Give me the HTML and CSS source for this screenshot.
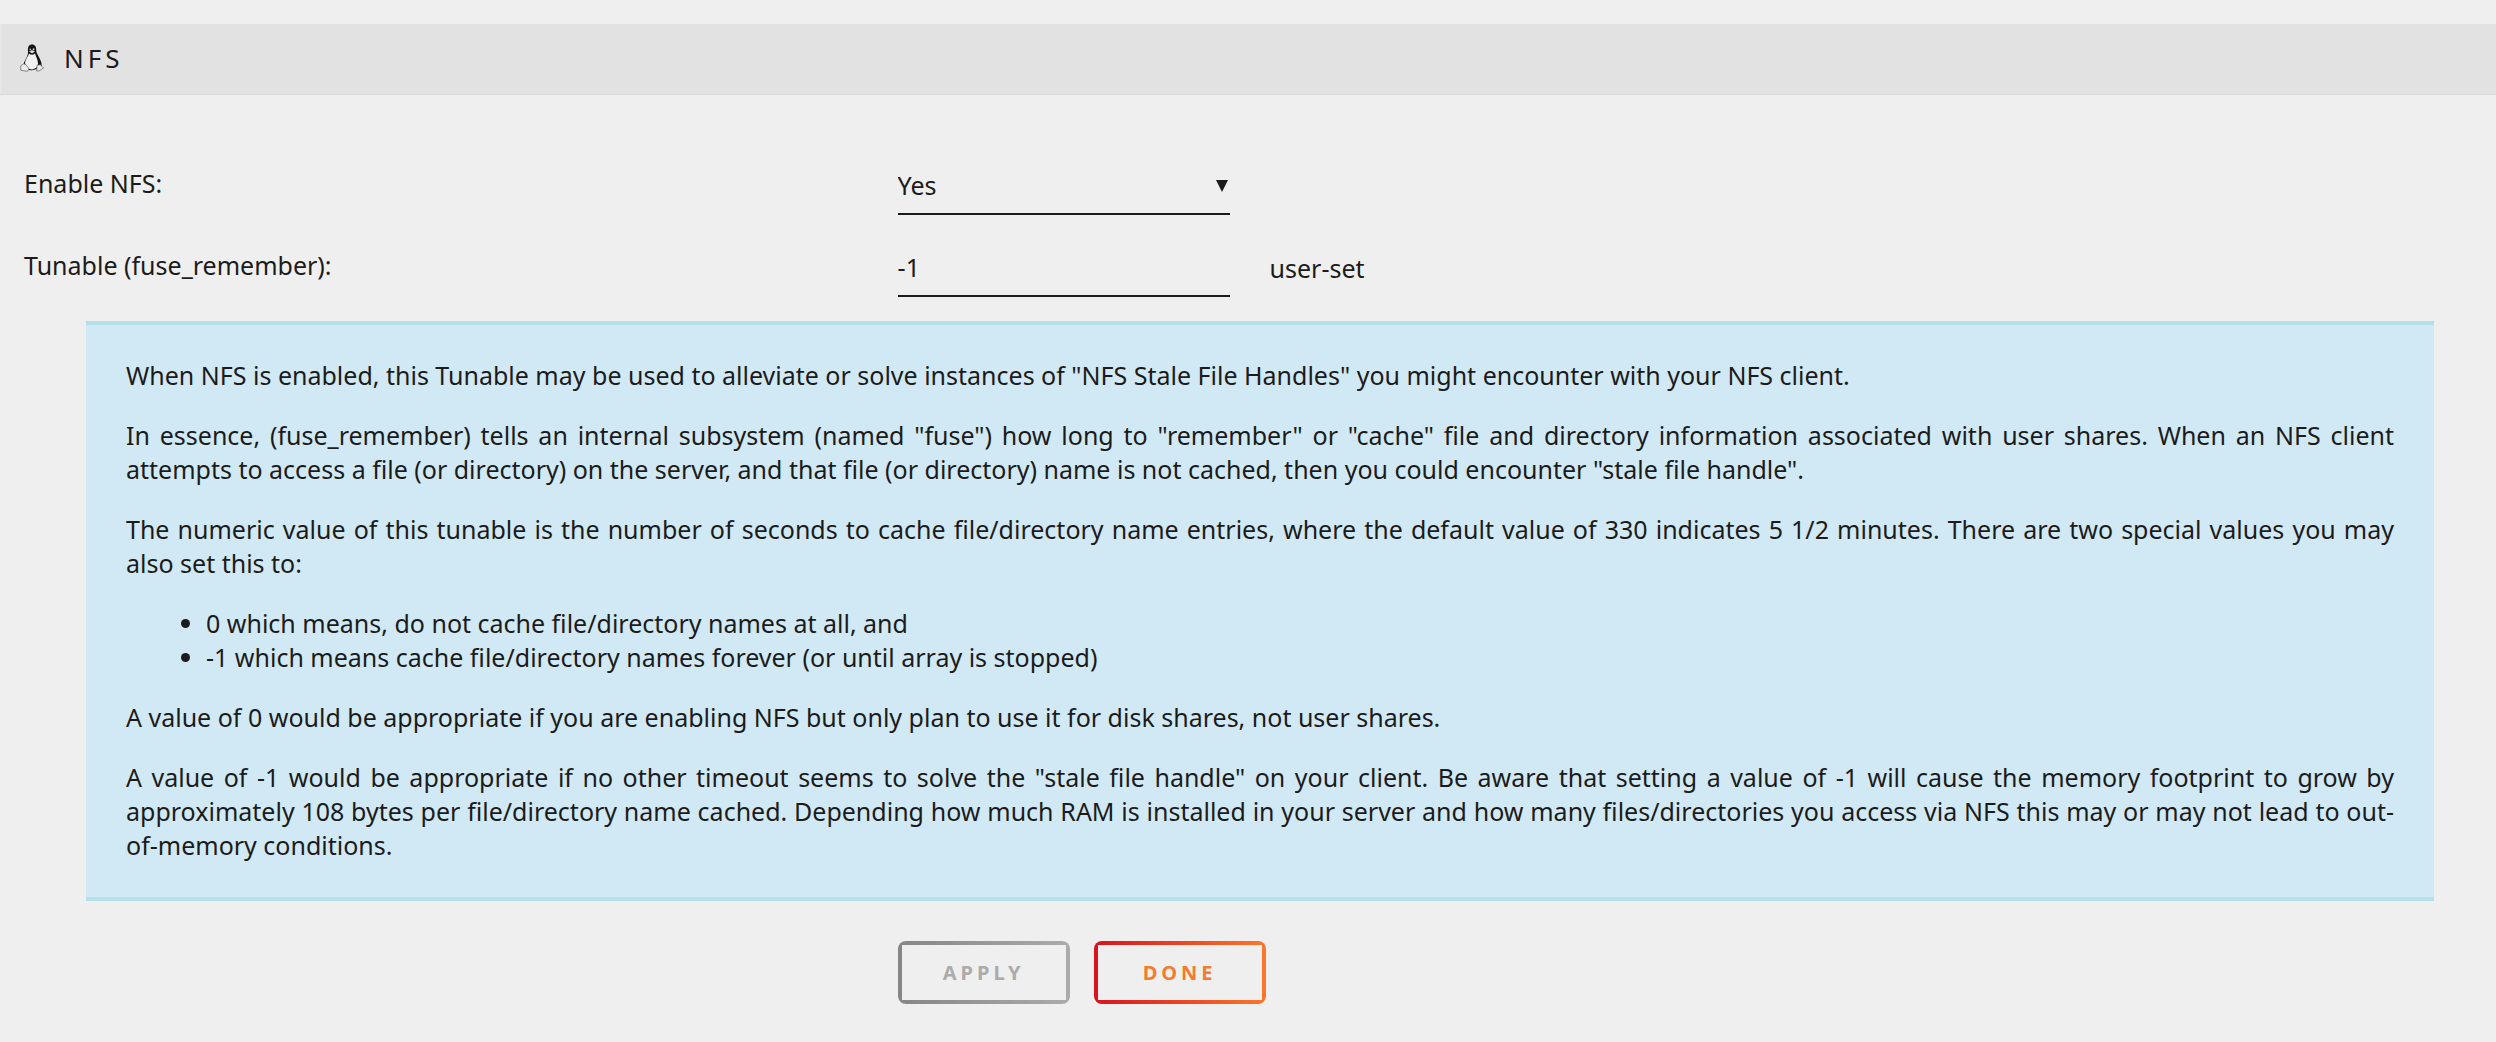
FILE: index.html
```html
<!DOCTYPE html>
<html lang="en">
<head>
<meta charset="utf-8">
<title>NFS Settings</title>
<link rel="stylesheet" href="styles.css">
</head>
<body>
<main class="page">
  <header class="title">
    <svg class="tux" viewBox="0 0 24 28" aria-hidden="true">
      <path d="M8 7.500C7.600 3 8.800 0.500 12 0.500s4.400 2.500 4.200 6c0 3 2.300 5 3.800 8.800 1.400 3 2 5 1.400 6.700l-3.600 2c-2.800 2.600-8.400 3-11.200 0.400l-3-3.900c0-2.500 2.800-6 3.600-8.500 0.700-1.700 0.900-3 0.800-4.500z" fill="#161515"/>
      <path d="M9 9.600c1.400 1.600 4.200 1.600 6 0 0.800 3 3 6.200 3 10 0 3.400-2.800 5.800-6 5.800-3.600 0-6.900-2.600-6.900-6.200 0-3.800 3.300-6.600 3.900-9.600z" fill="#f1f1f1"/>
      <path d="M9 7.500l2.800-1.400 3.200 1.200-2.800 2.300z" fill="#d5d5d5"/>
      <circle cx="10.200" cy="5.200" r="0.800" fill="#d8d8d8"/>
      <circle cx="13.600" cy="5.200" r="0.900" fill="#d8d8d8"/>
      <path d="M3.800 19.800l2.200 1 3 4-1.500 2.500-3.500-0.500-3.300-0.600 0.200-4.600z" fill="#ececec" stroke="#444" stroke-width="0.600"/>
      <path d="M17 21.200l3.500-0.500 0.700 1.200 2.400 2-4.500 3-2.400 0.100z" fill="#ececec" stroke="#444" stroke-width="0.600"/>
    </svg>
    <h1 class="title-text">NFS</h1>
  </header>
  <form class="settings">
    <div class="row">
      <label class="label" for="enable">Enable NFS:</label>
      <div class="field">
        <select class="control select" id="enable"><option>Yes</option><option>No</option></select>
        <svg class="arrow" viewBox="0 0 12 12" aria-hidden="true"><path d="M0 0h12L6 12z" fill="#1c1b1b"/></svg>
      </div>
    </div>
    <div class="row">
      <label class="label" for="tunable">Tunable (fuse_remember):</label>
      <div class="field">
        <input class="control" id="tunable" type="text" value="-1">
        <span class="note">user-set</span>
      </div>
    </div>
    <blockquote class="help">
      <p>When NFS is enabled, this Tunable may be used to alleviate or solve instances of "NFS Stale File Handles" you might encounter with your NFS client.</p>
      <p>In essence, (fuse_remember) tells an internal subsystem (named "fuse") how long to "remember" or "cache" file and directory information associated with user shares. When an NFS client attempts to access a file (or directory) on the server, and that file (or directory) name is not cached, then you could encounter "stale file handle".</p>
      <p>The numeric value of this tunable is the number of seconds to cache file/directory name entries, where the default value of 330 indicates 5 1/2 minutes. There are two special values you may also set this to:</p>
      <ul>
        <li>0 which means, do not cache file/directory names at all, and</li>
        <li>-1 which means cache file/directory names forever (or until array is stopped)</li>
      </ul>
      <p>A value of 0 would be appropriate if you are enabling NFS but only plan to use it for disk shares, not user shares.</p>
      <p>A value of -1 would be appropriate if no other timeout seems to solve the "stale file handle" on your client. Be aware that setting a value of -1 will cause the memory footprint to grow by approximately 108 bytes per file/directory name cached. Depending how much RAM is installed in your server and how many files/directories you access via NFS this may or may not lead to out-of-memory conditions.</p>
    </blockquote>
    <div class="row actions">
      <div class="buttons">
        <button class="button" type="submit" disabled>Apply</button>
        <button class="button done" type="button">Done</button>
      </div>
    </div>
  </form>
</main>
</body>
</html>
```

FILE: styles.css
```css
* { box-sizing: border-box; }
body {
  margin: 0;
  background: #efefef;
  color: #1c1b1b;
  font: 25px/34px "Noto Sans", sans-serif;
}
.page { padding-top: 24px; }
.title {
  display: flex;
  align-items: center;
  gap: 20px;
  min-height: 71px;
  padding: 0 20px 2px;
  background: #e2e2e2;
  border-bottom: 1px solid #dadada;
  box-shadow: inset 2px 0 #e7e7e7;
}
.tux { width: 24px; height: 28px; }
.title-text { margin: 0; font-size: 26px; font-weight: 400; letter-spacing: 4px; }
.settings { padding-top: 66px; }
.row {
  display: grid;
  grid-template-columns: calc(35% + 24px) 1fr;
  align-items: start;
  margin-bottom: 28px;
}
.label { padding: 5px 0 0 24px; }
.field { display: flex; gap: 40px; align-items: center; }
.control {
  width: 332px;
  height: 54px;
  padding: 0 0 4px;
  border: 0;
  border-bottom: 2px solid #1c1b1b;
  border-radius: 0;
  background: transparent;
  color: inherit;
  font: inherit;
}
.select { appearance: none; opacity: 1; }
.arrow {
  width: 12px;
  height: 12px;
  margin: 0 0 4px -54px;
  pointer-events: none;
}
.note { padding-bottom: 4px; }
.help {
  margin: -4px 62px 40px 86px;
  padding: 33px 40px 35px;
  border: solid #b3e0e9;
  border-width: 4px 0;
  background: #d1e9f5;
  text-align: justify;
}
.help p, .help ul { margin: 0 0 26px; }
.help ul { padding-left: 80px; }
.help p:last-child { margin-bottom: 0; }
.buttons { grid-column: 2; display: flex; gap: 24px; }
.button {
  min-width: 172px;
  height: 63px;
  padding: 0 36px;
  border: 0;
  border-radius: 8px;
  background:
    linear-gradient(#efefef, #efefef) 4px 4px / calc(100% - 8px) calc(100% - 8px) no-repeat,
    linear-gradient(90deg, #868686, #ababab);
  color: #ababab;
  font: 700 20px/24px "Noto Sans", sans-serif;
  letter-spacing: 4px;
  text-transform: uppercase;
}
.done {
  background:
    linear-gradient(#efefef, #efefef) 4px 4px / calc(100% - 8px) calc(100% - 8px) no-repeat,
    linear-gradient(90deg, #d9121f, #fb7829);
  color: #f47b30;
}
```
